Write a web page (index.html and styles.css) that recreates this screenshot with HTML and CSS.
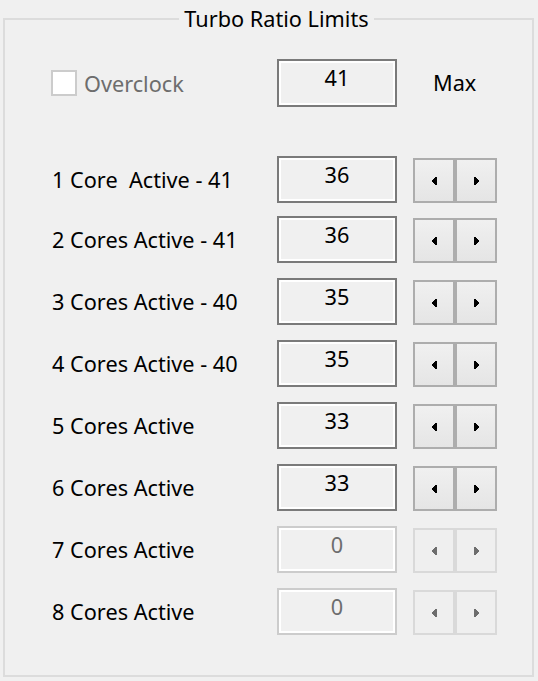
FILE: index.html
```html
<!DOCTYPE html>
<html lang="en">
<head>
  <meta charset="UTF-8" />
  <title>Turbo Ratio Limits</title>
  <link rel="stylesheet" href="styles.css">
</head>
<body>

<fieldset class="group">
  <legend>Turbo Ratio Limits</legend>

  <div class="grid top-row">
    <label class="check disabled"><span class="check-box"></span>Overclock</label>
    <div class="value">41</div>
    <span class="unit">Max</span>
  </div>

  <div class="ratios" id="ratios"></div>
</fieldset>

<script>
const ratios = [
  { label: "1 Core  Active - 41", value: 36, enabled: true },
  { label: "2 Cores Active - 41", value: 36, enabled: true },
  { label: "3 Cores Active - 40", value: 35, enabled: true },
  { label: "4 Cores Active - 40", value: 35, enabled: true },
  { label: "5 Cores Active", value: 33, enabled: true },
  { label: "6 Cores Active", value: 33, enabled: true },
  { label: "7 Cores Active", value: 0, enabled: false },
  { label: "8 Cores Active", value: 0, enabled: false }
];

const leftArrow = '<svg width="5" height="8" viewBox="0 0 5 8" shape-rendering="crispEdges"><path d="M3 0h2v8h-2zM2 1h1v6h-1zM1 2h1v4h-1zM0 3h1v2h-1z" /></svg>';
const rightArrow = '<svg width="5" height="8" viewBox="0 0 5 8" shape-rendering="crispEdges"><path d="M0 0h2v8h-2zM2 1h1v6h-1zM3 2h1v4h-1zM4 3h1v2h-1z" /></svg>';

const list = document.getElementById("ratios");
ratios.forEach(r => {
  const row = document.createElement("div");
  row.className = "grid ratio-row" + (r.enabled ? "" : " disabled");
  row.innerHTML =
    `<span class="label">${r.label}</span>` +
    `<div class="value">${r.value}</div>` +
    `<div class="spin"><button class="spin-btn">${leftArrow}</button><button class="spin-btn">${rightArrow}</button></div>`;
  list.appendChild(row);
});
</script>

</body>
</html>
```

FILE: styles.css
```css
body {
  margin: 0;
  background: #f0f0f0;
  font-family: "Noto Sans", "Open Sans", sans-serif;
  font-size: 21.7px;
  color: #000;
}
.group {
  margin: 6px 4px 4px 3px;
  padding: 27px 30px 30px 46px;
  border: 2px solid #dcdcdc;
  height: 671px;
  box-sizing: border-box;
  min-width: 0;
}
.group legend {
  margin: 0 auto;
  padding: 0 5px;
  line-height: 26px;
}
.grid {
  display: grid;
  grid-template-columns: 210px 120px 84px;
  column-gap: 16px;
  align-items: center;
}
.check {
  display: flex;
  align-items: center;
  gap: 7px;
}
.check-box {
  width: 26px;
  height: 26px;
  box-sizing: border-box;
  border: 2px solid #cccccc;
  background: #fff;
}
.check.disabled {
  color: #6d6d6d;
}
.value {
  height: 48px;
  box-sizing: border-box;
  border: 2px solid #7a7a7a;
  box-shadow: inset 0 0 0 2px #fff;
  text-align: center;
  padding-top: 4px;
  line-height: 26px;
}
.ratio-row .value {
  height: 47px;
}
.unit {
  padding-left: 20px;
  padding-bottom: 2px;
}
.ratios {
  display: flex;
  flex-direction: column;
  gap: 15px;
  margin-top: 49px;
}
.ratio-row:first-child {
  margin-bottom: -2px;
}
.label {
  white-space: pre;
  padding-left: 1px;
}
.spin {
  display: flex;
  height: 45px;
  align-self: end;
}
.spin-btn {
  flex: 1;
  margin: 0;
  padding: 0;
  border: 2px solid #adadad;
  background: linear-gradient(#f0f0f0, #e5e5e5);
  display: flex;
  align-items: center;
  justify-content: center;
  fill: #000;
}
.disabled .value {
  border-color: #cccccc;
  color: #6d6d6d;
}
.disabled .spin-btn {
  border-color: #d9d9d9;
  background: #efefef;
  fill: #6d6d6d;
}
```
